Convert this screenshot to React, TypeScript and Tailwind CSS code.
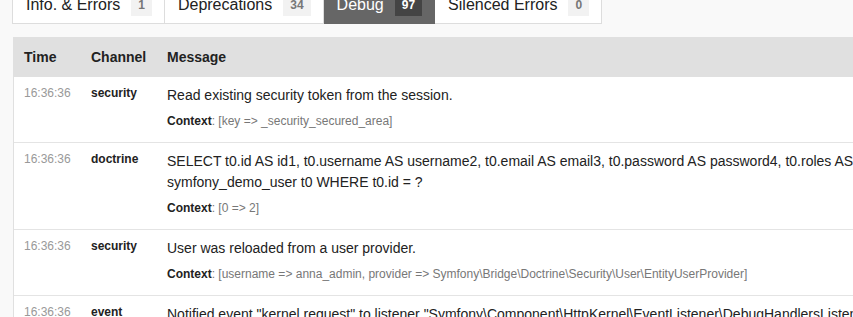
import React from "react"

const tabs = [
  { label: "Info. & Errors", count: 1, active: false },
  { label: "Deprecations", count: 34, active: false },
  { label: "Debug", count: 97, active: true },
  { label: "Silenced Errors", count: 0, active: false },
]

const logs = [
  {
    time: "16:36:36",
    channel: "security",
    message: "Read existing security token from the session.",
    context: "[key => _security_secured_area]",
  },
  {
    time: "16:36:36",
    channel: "doctrine",
    message:
      "SELECT t0.id AS id1, t0.username AS username2, t0.email AS email3, t0.password AS password4, t0.roles AS roles5 FROM symfony_demo_user t0 WHERE t0.id = ?",
    context: "[0 => 2]",
  },
  {
    time: "16:36:36",
    channel: "security",
    message: "User was reloaded from a user provider.",
    context:
      "[username => anna_admin, provider => Symfony\\Bridge\\Doctrine\\Security\\User\\EntityUserProvider]",
  },
  {
    time: "16:36:36",
    channel: "event",
    message:
      'Notified event "kernel.request" to listener "Symfony\\Component\\HttpKernel\\EventListener\\DebugHandlersListener::configure".',
    context: "",
  },
]

export default function App() {
  return (
    <div className="w-[853px] h-[317px] overflow-hidden bg-[#f9f9f9] font-['Liberation_Sans',Arial,sans-serif] text-[#222]">
      <div className="-mt-4">
        {/* Tab navigation */}
        <ul className="flex ml-3">
          {tabs.map((tab, i) => (
            <li
              key={tab.label}
              className={
                tab.active
                  ? "flex items-center gap-[11px] pl-[13px] pr-3 pt-[8px] pb-[6px] border-y border-r border-[#666] bg-[#666] text-white"
                  : i === 0
                  ? "flex items-center gap-[11px] pl-[13px] pr-3 pt-[8px] pb-[6px] border border-[#ddd] bg-white"
                  : "flex items-center gap-[11px] pl-[13px] pr-3 pt-[8px] pb-[6px] border-y border-r border-[#ddd] bg-white"
              }
            >
              <span className="text-[16px] leading-[24px]">{tab.label}</span>
              <span
                className={
                  tab.active
                    ? "text-[12px] font-bold leading-[12px] py-[5px] px-[7px] bg-[#444] text-white"
                    : "text-[12px] font-bold leading-[12px] py-[5px] px-[7px] bg-[#f2f2f2] text-[#777]"
                }
              >
                {tab.count}
              </span>
            </li>
          ))}
        </ul>

        {/* Log table */}
        <div className="mt-[13px] ml-[13px] w-[995px] border border-[#e0e0e0] bg-white">
          <div className="grid grid-cols-[67px_76px_1fr] bg-[#e0e0e0] text-[14px] font-bold leading-[19px]">
            <div className="px-[10px] py-[10px]">Time</div>
            <div className="px-[10px] py-[10px]">Channel</div>
            <div className="px-[10px] py-[10px]">Message</div>
          </div>
          {logs.map((log, i) => (
            <div key={i} className="grid grid-cols-[67px_76px_1fr] border-b border-[#e4e4e4]">
              <div className="px-[10px] pt-2 text-[12px] leading-[17px] text-[#999]">{log.time}</div>
              <div className="px-[10px] pt-2 text-[12px] leading-[17px] font-bold">{log.channel}</div>
              <div className="px-[10px] pt-2 pb-[11px]">
                <div className="text-[14px] leading-[21px]">{log.message}</div>
                {log.context && (
                  <div className="mt-[5px] text-[12px] leading-[20px] text-[#777]">
                    <strong className="text-[#222]">Context</strong>: {log.context}
                  </div>
                )}
              </div>
            </div>
          ))}
        </div>
      </div>
    </div>
  )
}
